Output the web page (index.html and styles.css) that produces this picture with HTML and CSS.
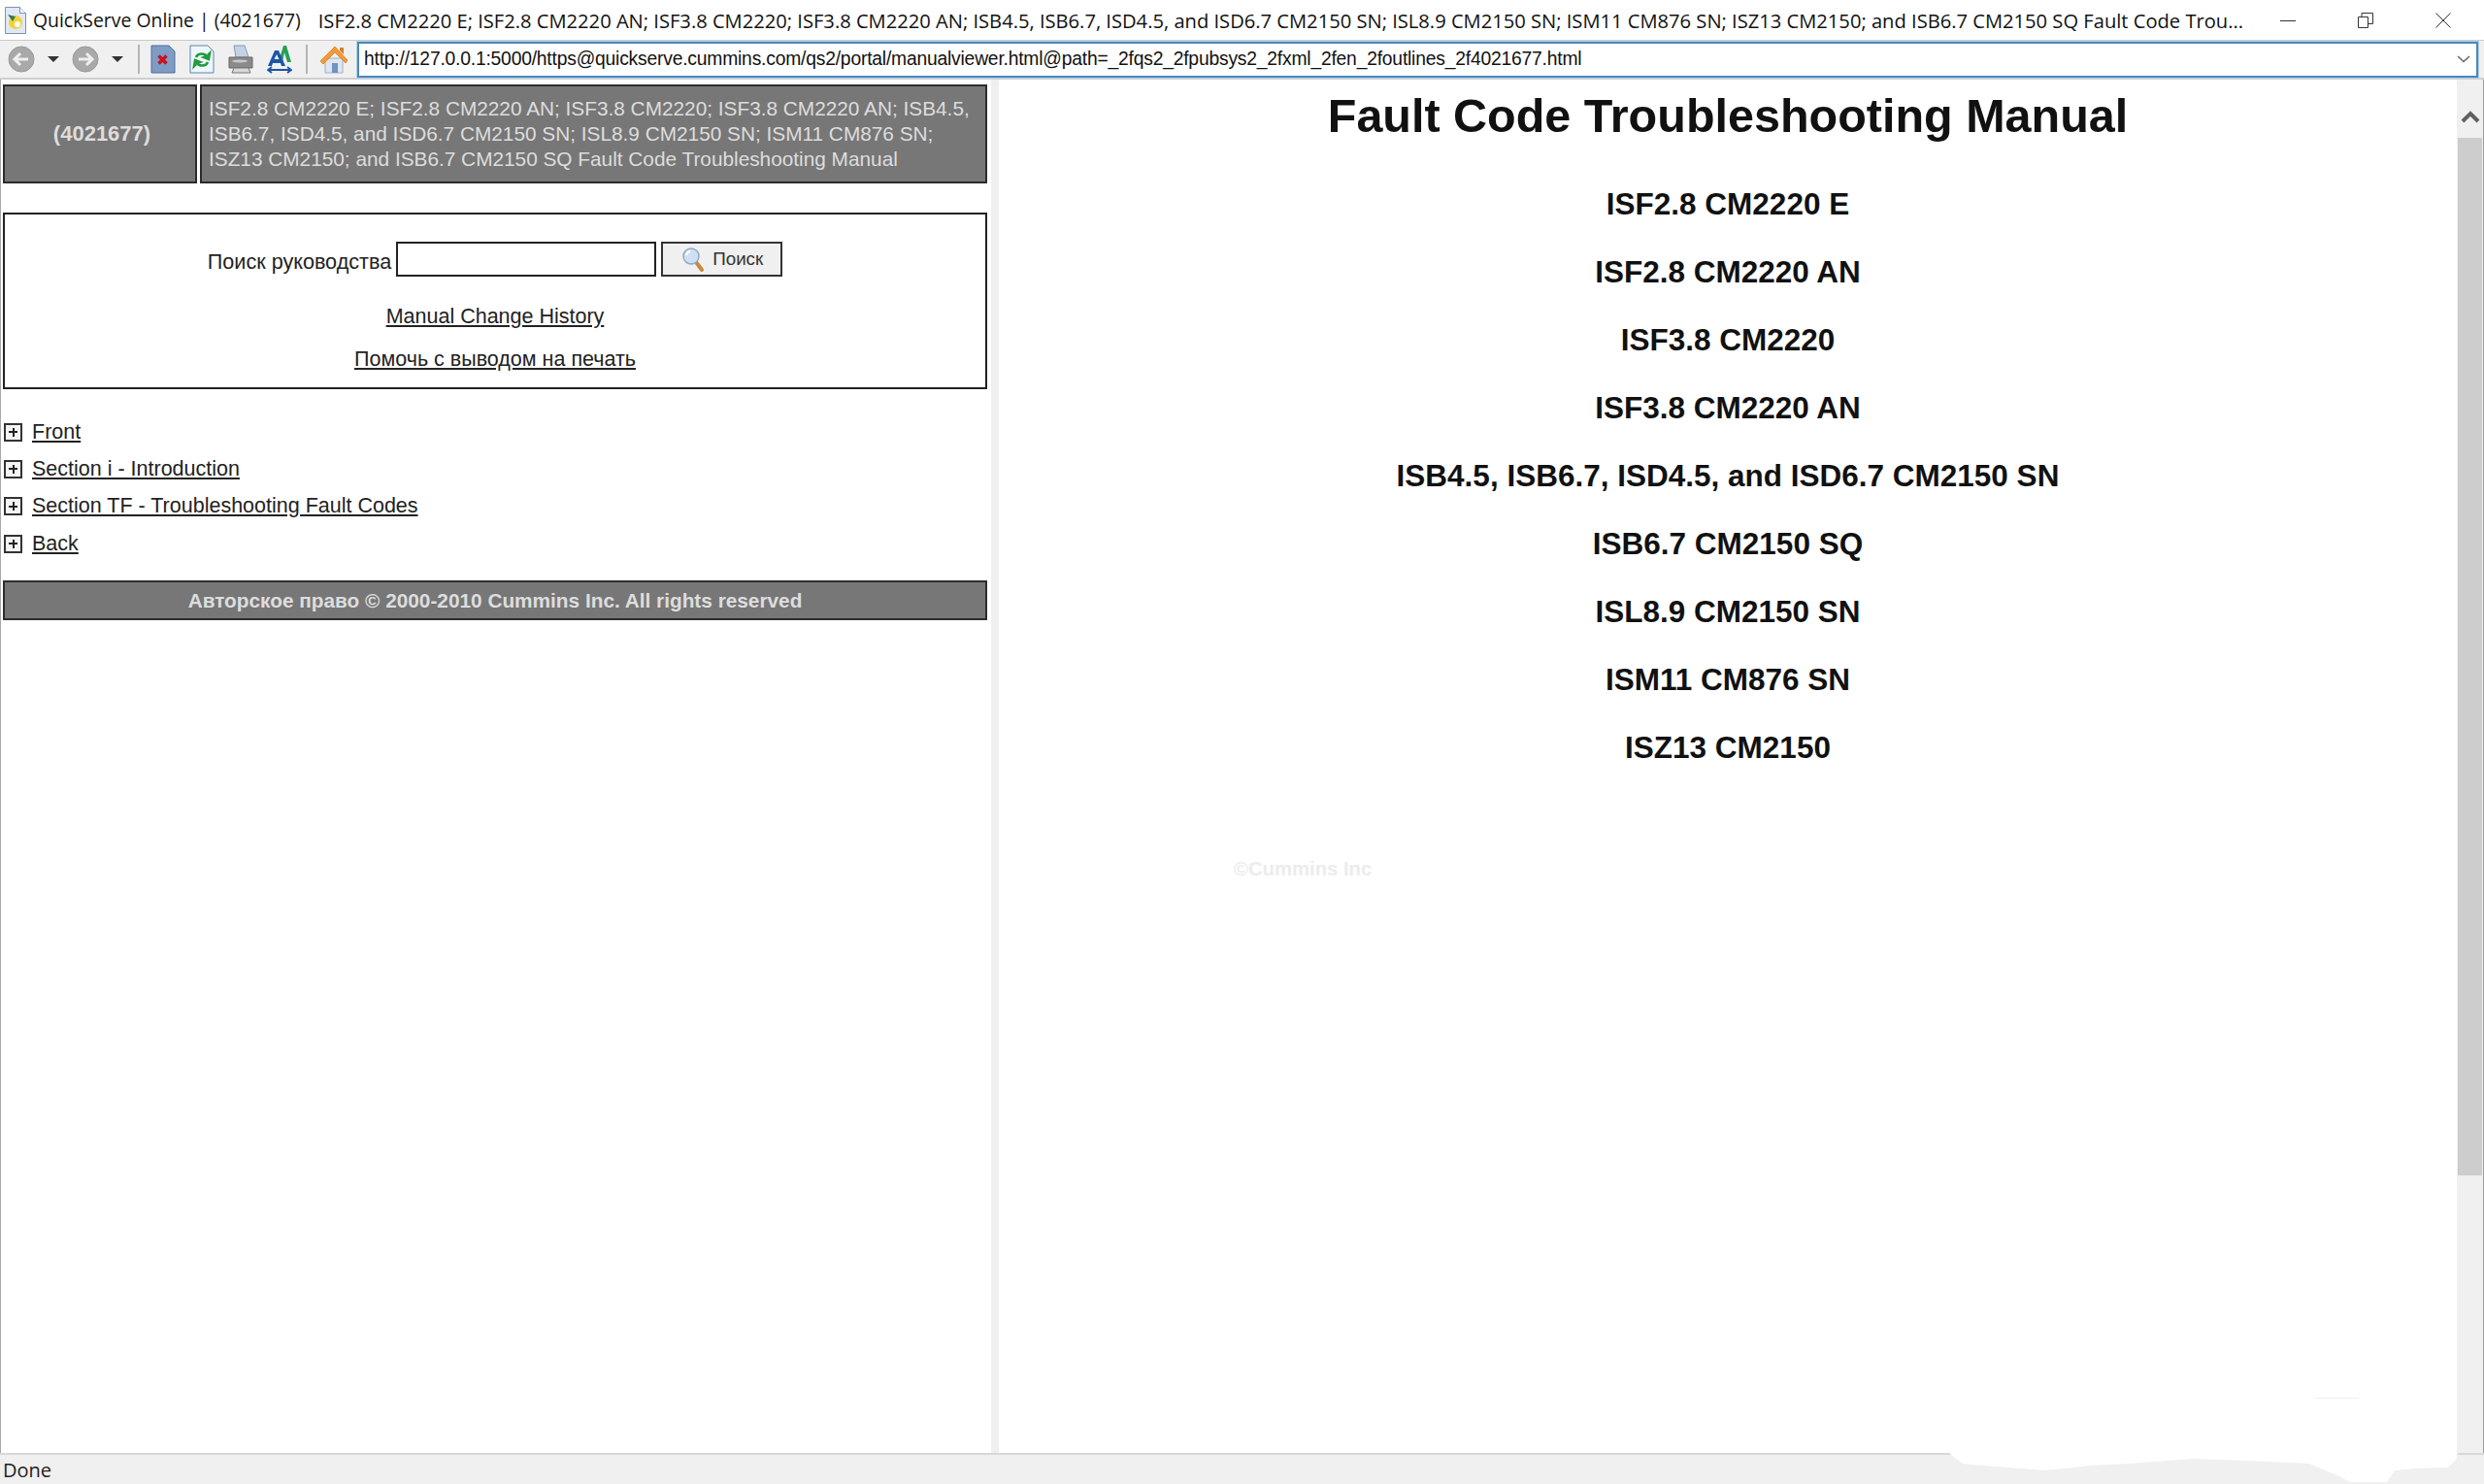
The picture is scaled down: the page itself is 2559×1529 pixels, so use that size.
FILE: index.html
```html
<!DOCTYPE html>
<html lang="ru">
<head>
<meta charset="utf-8">
<title>QuickServe Online | (4021677)</title>
<link rel="stylesheet" href="styles.css">
</head>
<body>
<div class="window">
  <header class="titlebar">
    <svg class="app-icon" width="24" height="30" viewBox="0 0 24 30">
      <path d="M1.5 1.5h15l6 6v21h-21z" fill="#dfe9f5" stroke="#7f93ad"/>
      <path d="M16.5 1.5v6h6" fill="#fff" stroke="#7f93ad"/>
      <circle cx="12" cy="17" r="7" fill="#f2d23c"/>
      <path d="M4 9l8 2-3 5z" fill="#2b7d4f"/>
      <circle cx="14" cy="19" r="3" fill="#fff"/>
    </svg>
    <span class="title-main">QuickServe Online | (4021677)</span>
    <span class="title-doc">ISF2.8 CM2220 E; ISF2.8 CM2220 AN; ISF3.8 CM2220; ISF3.8 CM2220 AN; ISB4.5, ISB6.7, ISD4.5, and ISD6.7 CM2150 SN; ISL8.9 CM2150 SN; ISM11 CM876 SN; ISZ13 CM2150; and ISB6.7 CM2150 SQ Fault Code Trou...</span>
    <div class="window-controls">
      <svg width="16" height="16" viewBox="0 0 16 16"><path d="M0 8.5h16" stroke="#333" fill="none"/></svg>
      <svg width="16" height="16" viewBox="0 0 16 16"><path d="M.5 4.5h10v11H.5zM4 4.5V.5h11.5v11h-5" stroke="#333" fill="none"/></svg>
      <svg width="16" height="16" viewBox="0 0 16 16"><path d="M.5.5l15 15M15.5.5l-15 15" stroke="#333" fill="none"/></svg>
    </div>
  </header>

  <nav class="toolbar">
    <svg class="tool-round" width="28" height="28" viewBox="0 0 28 28">
      <circle cx="14" cy="14" r="13" fill="#a9a9a9" stroke="#989898"/>
      <path d="M21 14H8M13 8l-6 6 6 6" stroke="#eee" stroke-width="3" fill="none"/>
    </svg>
    <svg class="tool-caret" width="12" height="6" viewBox="0 0 12 6"><path d="M0 0h12L6 6z" fill="#333"/></svg>
    <svg class="tool-round" width="28" height="28" viewBox="0 0 28 28">
      <circle cx="14" cy="14" r="13" fill="#a9a9a9" stroke="#989898"/>
      <path d="M7 14h13M15 8l6 6-6 6" stroke="#eee" stroke-width="3" fill="none"/>
    </svg>
    <svg class="tool-caret" width="12" height="6" viewBox="0 0 12 6"><path d="M0 0h12L6 6z" fill="#333"/></svg>
    <span class="tool-sep"></span>
    <svg class="tool-doc" width="26" height="30" viewBox="0 0 26 30">
      <path d="M1 1h18l6 6v22H1z" fill="#7f9cc4" stroke="#4e6f9c"/>
      <path d="M8.500 11.500l8 8M16.500 11.500l-8 8" stroke="#c8141c" stroke-width="3.500"/>
    </svg>
    <svg class="tool-doc" width="26" height="30" viewBox="0 0 26 30">
      <path d="M1 1h18l6 6v22H1z" fill="#eef6fb" stroke="#5c84b0"/>
      <path d="M7 13a6 5 0 0 1 11-1l-3 1 5 2 1-6-2 2" fill="none" stroke="#1f9a3c" stroke-width="2.500"/>
      <path d="M19 18a6 5 0 0 1-11 1l3-1-5-2-1 6 2-2" fill="none" stroke="#1f9a3c" stroke-width="2.500"/>
    </svg>
    <svg class="tool-doc" width="26" height="30" viewBox="0 0 26 30">
      <path d="M6 1h11l4 12H8z" fill="#c3d3e4" stroke="#8a9bad"/>
      <path d="M1 13h24v11H1z" fill="#8b8b8b" stroke="#666"/>
      <path d="M6 24h15l2 5H4z" fill="#d7d7d7" stroke="#777"/>
      <ellipse cx="12" cy="17" rx="8" ry="1.500" fill="#c9c9c9"/>
    </svg>
    <svg class="tool-doc" width="26" height="30" viewBox="0 0 26 30">
      <path d="M12 18L17 1h3l5 17h-4l-3-10-2 10z" fill="#25a055"/>
      <path d="M1 22L8 6h4l7 16h-4l-1-3H6l-1 3zM7.500 15h5L10 10z" fill="#1b55a8"/>
      <path d="M1 26h24M5 23l-4 3 4 3M21 23l4 3-4 3" stroke="#1b55a8" stroke-width="1.800" fill="none"/>
    </svg>
    <span class="tool-sep tool-sep-second"></span>
    <svg class="tool-home" width="30" height="30" viewBox="0 0 30 30">
      <path d="M6 14h18v15H6z" fill="#dfe6ef" stroke="#9fb0c4"/>
      <path d="M13 19h6v10h-6z" fill="#6f93c2"/>
      <path d="M1 17L16 2l13 14-2 3L16 8 4 20z" fill="#f19a3b" stroke="#d97f22" stroke-width=".8"/>
      <path d="M21 3h4v7l-4-4z" fill="#d97f22"/>
    </svg>
    <div class="address">
      <span class="address-text">http://127.0.0.1:5000/https@quickserve.cummins.com/qs2/portal/manualviewer.html@path=_2fqs2_2fpubsys2_2fxml_2fen_2foutlines_2f4021677.html</span>
      <svg class="address-caret" width="14" height="8" viewBox="0 0 14 8"><path d="M1 1l6 5.500L13 1" stroke="#666" stroke-width="1.500" fill="none"/></svg>
    </div>
  </nav>

  <main class="panes">
    <section class="left-pane">
      <div class="doc-head">
        <div class="doc-id">(4021677)</div>
        <div class="doc-name">ISF2.8 CM2220 E; ISF2.8 CM2220 AN; ISF3.8 CM2220; ISF3.8 CM2220 AN; ISB4.5, ISB6.7, ISD4.5, and ISD6.7 CM2150 SN; ISL8.9 CM2150 SN; ISM11 CM876 SN; ISZ13 CM2150; and ISB6.7 CM2150 SQ Fault Code Troubleshooting Manual</div>
      </div>

      <div class="search-box">
        <form class="search-row">
          <label class="search-label" for="q">Поиск руководства</label>
          <input class="search-input" id="q" type="text">
          <button class="search-button" type="button">
            <svg width="24" height="26" viewBox="0 0 24 26">
              <path d="M15 16l6 8" stroke="#c98a3c" stroke-width="4" stroke-linecap="round"/>
              <circle cx="10" cy="10" r="8" fill="#cfe0f3" stroke="#8fa9c6" stroke-width="1.500"/>
              <path d="M5 9a5 5 0 0 1 4-4" stroke="#fff" stroke-width="2" fill="none"/>
            </svg>
            <span>Поиск</span>
          </button>
        </form>
        <a class="search-link search-link-first" href="#">Manual Change History</a>
        <a class="search-link" href="#">Помочь с выводом на печать</a>
      </div>

      <ul class="tree">
        <li class="tree-row"><span class="tree-plus"></span><a href="#">Front</a></li>
        <li class="tree-row"><span class="tree-plus"></span><a href="#">Section i - Introduction</a></li>
        <li class="tree-row"><span class="tree-plus"></span><a href="#">Section TF - Troubleshooting Fault Codes</a></li>
        <li class="tree-row"><span class="tree-plus"></span><a href="#">Back</a></li>
      </ul>

      <footer class="copyright">Авторское право © 2000-2010 Cummins Inc. All rights reserved</footer>
    </section>

    <div class="splitter"></div>

    <section class="right-pane">
      <h1 class="manual-title">Fault Code Troubleshooting Manual</h1>
      <h2 class="engine">ISF2.8 CM2220 E</h2>
      <h2 class="engine">ISF2.8 CM2220 AN</h2>
      <h2 class="engine">ISF3.8 CM2220</h2>
      <h2 class="engine">ISF3.8 CM2220 AN</h2>
      <h2 class="engine">ISB4.5, ISB6.7, ISD4.5, and ISD6.7 CM2150 SN</h2>
      <h2 class="engine">ISB6.7 CM2150 SQ</h2>
      <h2 class="engine">ISL8.9 CM2150 SN</h2>
      <h2 class="engine">ISM11 CM876 SN</h2>
      <h2 class="engine">ISZ13 CM2150</h2>
      <div class="watermark">©Cummins Inc</div>
      <div class="scan-mark"></div>
    </section>

    <aside class="scrollbar">
      <svg class="scroll-up" width="20" height="14" viewBox="0 0 20 14"><path d="M2 12l8-8 8 8" stroke="#606060" stroke-width="4" fill="none"/></svg>
      <div class="scroll-thumb"></div>
    </aside>
  </main>

  <footer class="statusbar">Done</footer>

  <svg class="torn-edge" width="551" height="40" viewBox="0 0 551 40">
    <path d="M0 1L6 6L14 12L35 14L60 16L98 19L120 17L144 14L186 12L225 9L249 7L280 8L330 10L371 12L385 18L400 24L413 31H451L459 19L480 17L514 16L522 8L524 0V0H0z" fill="#fff"/>
  </svg>
</div>
</body>
</html>
```
FILE: styles.css
```css
* { box-sizing: border-box; }

html, body {
  margin: 0;
  height: 100%;
  background: #fff;
  overflow: hidden;
}

body {
  font-family: "Liberation Sans", Arial, sans-serif;
  color: #111;
}

.window {
  position: relative;
  display: flex;
  flex-direction: column;
  height: 100vh;
}

.titlebar {
  flex: 0 0 41px;
  display: flex;
  align-items: center;
  padding: 0 34px 0 4px;
  background: #fff;
  font-family: "Open Sans", sans-serif;
  font-size: 19.400px;
  color: #111;
  white-space: nowrap;
}

.app-icon { flex: none; margin-right: 6px; }
.title-main { margin-right: 18px; }
.title-doc { flex: none; font-size: 20.150px; }

.window-controls {
  display: flex;
  align-items: center;
  gap: 64px;
  margin-left: auto;
}

.toolbar {
  flex: 0 0 41px;
  display: flex;
  align-items: center;
  padding: 0 6px 0 8px;
  background: #f0f0f0;
  border-top: 1px solid #c9c9c9;
  border-bottom: 2px solid #cfcfcf;
}

.tool-round { flex: none; }
.tool-caret { flex: none; margin: 0 13px 0 13px; }
.tool-sep {
  flex: none;
  width: 2px;
  height: 30px;
  margin: 0 11px 0 2px;
  background: #b5b5b5;
}
.tool-doc { flex: none; margin-right: 14px; }
.tool-sep-second { margin: 0 12px 0 0; }
.tool-home { flex: none; margin-right: 9px; }

.address {
  flex: 1;
  height: 37px;
  display: flex;
  align-items: center;
  justify-content: space-between;
  padding: 0 6px 0 5px;
  background: #fff;
  border: 2px solid #4b87bd;
  box-shadow: 0 0 0 1px #b4d3e8;
}

.address-text {
  font-size: 19.300px;
  letter-spacing: -.2px;
  color: #111;
  white-space: nowrap;
}

.panes {
  flex: 1;
  display: flex;
  min-height: 0;
}

.left-pane {
  flex: 0 0 1021px;
  padding: 5px 4px 0 2px;
  border-left: 1px solid #a8a8a8;
}

.doc-head {
  display: flex;
  gap: 3px;
  height: 102px;
}

.doc-id, .doc-name, .copyright {
  background: #777;
  border: 2px solid #2c2c2c;
  color: #ddd;
}

.doc-id {
  flex: 0 0 200px;
  display: flex;
  align-items: center;
  justify-content: center;
  padding-left: 4px;
  font-size: 22px;
  font-weight: 700;
}

.doc-name {
  flex: 1;
  display: flex;
  align-items: center;
  padding: 0 5px 0 7px;
  font-size: 20.800px;
  line-height: 26px;
}

.search-box {
  display: flex;
  flex-direction: column;
  align-items: center;
  height: 182px;
  margin-top: 30px;
  padding-top: 28px;
  border: 2px solid #222;
}

.search-row {
  display: flex;
  align-items: stretch;
  height: 36px;
}

.search-label {
  align-self: center;
  margin: 5px 5px 0 0;
  font-size: 21.600px;
  color: #222;
}

.search-input {
  width: 268px;
  margin: 0 5px 0 0;
  padding: 0;
  background: #fff;
  border: 2px solid #222;
  border-radius: 0;
}

.search-button {
  display: flex;
  align-items: center;
  gap: 8px;
  width: 125px;
  margin: 0;
  padding: 0 0 0 19px;
  background: #f0f0f0;
  border: 2px solid #333;
  border-radius: 0;
  font-family: inherit;
  font-size: 18.800px;
  color: #333;
}

.search-link {
  font-size: 21.500px;
  line-height: 24px;
  color: #222;
}

.search-link-first { margin: 29px 0 20px; }

.tree {
  list-style: none;
  margin: 25px 0 0;
  padding: 0;
}

.tree-row {
  display: flex;
  align-items: center;
  height: 38.330px;
  padding-left: 1px;
  font-size: 21.500px;
}

.tree-row a { color: #222; }

.tree-plus {
  position: relative;
  flex: none;
  width: 19px;
  height: 19px;
  margin-right: 10px;
  background: #f4f4f4;
  border: 2px solid #333;
}

.tree-plus::before,
.tree-plus::after {
  content: "";
  position: absolute;
  background: #222;
}
.tree-plus::before { left: 3px; right: 3px; top: 6.500px; height: 2px; }
.tree-plus::after { top: 3px; bottom: 3px; left: 6.500px; width: 2px; }

.copyright {
  height: 41px;
  margin-top: 19px;
  display: flex;
  align-items: center;
  justify-content: center;
  font-size: 20.800px;
  font-weight: 700;
}

.splitter {
  flex: 0 0 8px;
  background: #efefef;
}

.right-pane {
  position: relative;
  flex: 1;
  padding-top: 2px;
  text-align: center;
  color: #111;
}

.manual-title {
  margin: 0;
  height: 91px;
  font-size: 48.500px;
  line-height: 70px;
  font-weight: 700;
}

.engine {
  margin: 0;
  height: 70px;
  font-size: 31.500px;
  line-height: 70px;
  font-weight: 700;
}

.watermark {
  position: absolute;
  left: 242px;
  top: 802px;
  font-size: 20.300px;
  font-weight: 700;
  color: #ececec;
}

.scan-mark {
  position: absolute;
  left: 1355px;
  top: 1358px;
  width: 46px;
  height: 1px;
  background: #efefef;
}

.scrollbar {
  position: relative;
  flex: 0 0 28px;
  padding-top: 60px;
  background: #f0f0f0;
  border-right: 1px solid #9a9a9a;
}

.scroll-up {
  position: absolute;
  top: 31px;
  left: 4px;
}

.scroll-thumb {
  width: 25px;
  height: 1069px;
  margin-left: 1px;
  background: #cdcdcd;
}

.statusbar {
  flex: 0 0 32px;
  display: flex;
  align-items: center;
  padding-left: 3px;
  background: #f0f0f0;
  border-top: 2px solid #d8d8d8;
  font-family: "Open Sans", sans-serif;
  font-size: 20px;
  color: #222;
}

.torn-edge {
  position: absolute;
  left: 2008px;
  top: 1496px;
}
```
